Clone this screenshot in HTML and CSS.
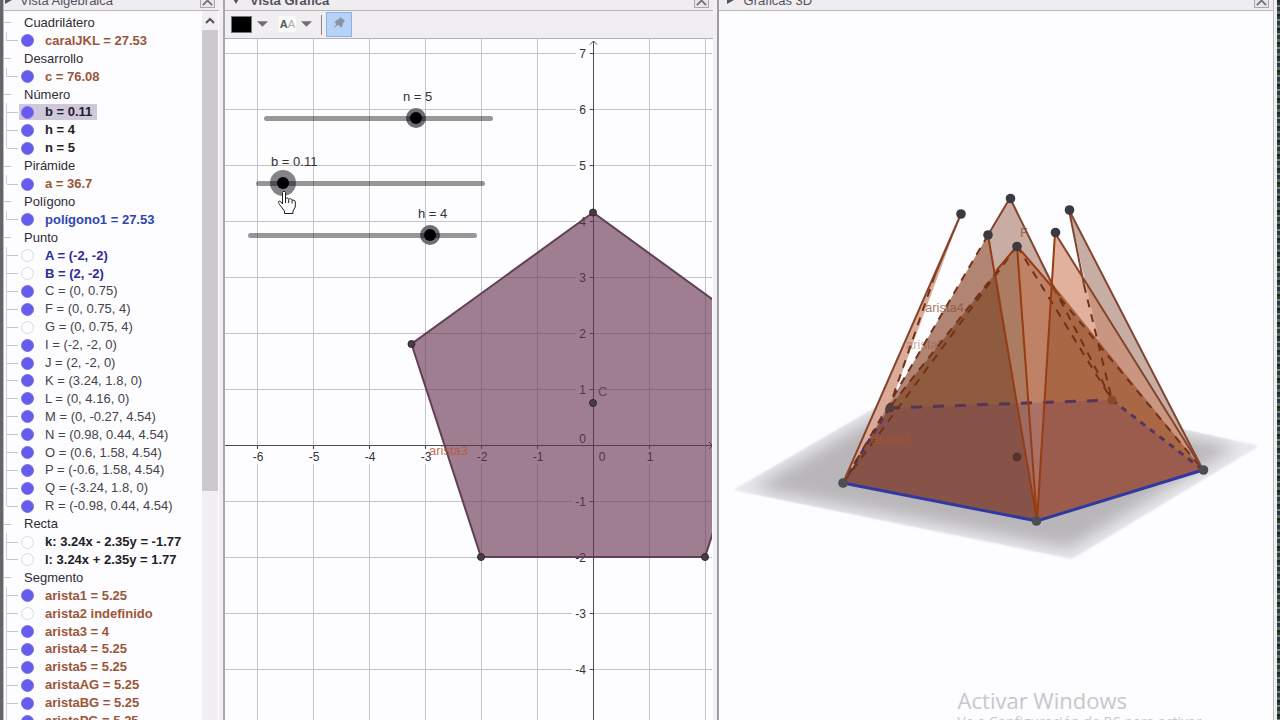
FILE: index.html
```html
<!DOCTYPE html>
<html lang="es">
<head>
<meta charset="utf-8">
<title>GeoGebra</title>
<link rel="stylesheet" href="styles.css">
</head>
<body>
<main class="app">
  <section class="panel algebra">
    <header class="titlebar">
      <svg class="fold" viewBox="0 0 8 8"><path d="M1 0 8 4 1 8z"/></svg>
      <h2>Vista Algebraica</h2>
      <button class="close" aria-label="Cerrar vista algebraica"><svg viewBox="0 0 14 14"><path d="M2 2 12 12M12 2 2 12"/></svg></button>
    </header>
    <div class="tree-area">
      <ul class="tree">
        <li class="group">Cuadrilátero</li>
        <li class="item brown last"><label><input type="checkbox" checked>caralJKL = 27.53</label></li>
        <li class="group">Desarrollo</li>
        <li class="item brown last"><label><input type="checkbox" checked>c = 76.08</label></li>
        <li class="group">Número</li>
        <li class="item black"><label class="selected"><input type="checkbox" checked>b = 0.11</label></li>
        <li class="item black"><label><input type="checkbox" checked>h = 4</label></li>
        <li class="item black last"><label><input type="checkbox" checked>n = 5</label></li>
        <li class="group">Pirámide</li>
        <li class="item brown last"><label><input type="checkbox" checked>a = 36.7</label></li>
        <li class="group">Polígono</li>
        <li class="item blue last"><label><input type="checkbox" checked>polígono1 = 27.53</label></li>
        <li class="group">Punto</li>
        <li class="item navy"><label><input type="checkbox">A = (-2, -2)</label></li>
        <li class="item navy"><label><input type="checkbox">B = (2, -2)</label></li>
        <li class="item"><label><input type="checkbox" checked>C = (0, 0.75)</label></li>
        <li class="item"><label><input type="checkbox" checked>F = (0, 0.75, 4)</label></li>
        <li class="item"><label><input type="checkbox">G = (0, 0.75, 4)</label></li>
        <li class="item"><label><input type="checkbox" checked>I = (-2, -2, 0)</label></li>
        <li class="item"><label><input type="checkbox" checked>J = (2, -2, 0)</label></li>
        <li class="item"><label><input type="checkbox" checked>K = (3.24, 1.8, 0)</label></li>
        <li class="item"><label><input type="checkbox" checked>L = (0, 4.16, 0)</label></li>
        <li class="item"><label><input type="checkbox" checked>M = (0, -0.27, 4.54)</label></li>
        <li class="item"><label><input type="checkbox" checked>N = (0.98, 0.44, 4.54)</label></li>
        <li class="item"><label><input type="checkbox" checked>O = (0.6, 1.58, 4.54)</label></li>
        <li class="item"><label><input type="checkbox" checked>P = (-0.6, 1.58, 4.54)</label></li>
        <li class="item"><label><input type="checkbox" checked>Q = (-3.24, 1.8, 0)</label></li>
        <li class="item last"><label><input type="checkbox" checked>R = (-0.98, 0.44, 4.54)</label></li>
        <li class="group">Recta</li>
        <li class="item black"><label><input type="checkbox">k: 3.24x - 2.35y = -1.77</label></li>
        <li class="item black last"><label><input type="checkbox">l: 3.24x + 2.35y = 1.77</label></li>
        <li class="group">Segmento</li>
        <li class="item brown"><label><input type="checkbox" checked>arista1 = 5.25</label></li>
        <li class="item brown"><label><input type="checkbox">arista2 indefinido</label></li>
        <li class="item brown"><label><input type="checkbox" checked>arista3 = 4</label></li>
        <li class="item brown"><label><input type="checkbox" checked>arista4 = 5.25</label></li>
        <li class="item brown"><label><input type="checkbox" checked>arista5 = 5.25</label></li>
        <li class="item brown"><label><input type="checkbox" checked>aristaAG = 5.25</label></li>
        <li class="item brown"><label><input type="checkbox" checked>aristaBG = 5.25</label></li>
        <li class="item brown"><label><input type="checkbox" checked>aristaPG = 5.25</label></li>
      </ul>
      <div class="scrollbar">
        <button class="scroll-up" aria-label="Subir"><svg viewBox="0 0 10 8"><path d="M1 6 5 2 9 6"/></svg></button>
        <div class="scroll-thumb"></div>
      </div>
    </div>
  </section>

  <section class="panel graphics">
    <header class="titlebar strong">
      <svg class="fold" viewBox="0 0 8 8"><path d="M0 1 8 1 4 8z"/></svg>
      <h2>Vista Gráfica</h2>
      <button class="close" aria-label="Cerrar vista gráfica"><svg viewBox="0 0 14 14"><path d="M2 2 12 12M12 2 2 12"/></svg></button>
    </header>
    <div class="toolbar">
      <button class="tool" aria-label="Color"><span class="swatch"></span><svg class="caret" viewBox="0 0 12 6"><path d="M0 0H12L6 6z"/></svg></button>
      <button class="tool" aria-label="Tamaño de texto"><span class="aa">A<span>A</span></span><svg class="caret" viewBox="0 0 12 6"><path d="M0 0H12L6 6z"/></svg></button>
      <button class="pin" aria-label="Fijar a la pantalla"><svg viewBox="0 0 16 16"><path d="M9 1 15 5 13 7 12 11 10 13 7 10 2 14 5 9 3 7 6 4 8 4z"/></svg></button>
    </div>
    <div class="canvas">
      <svg class="scene" role="img" aria-label="Pentágono en el plano">
        <g transform="translate(-225 -39)">
          <path class="grid" d="M257.500 39V720M313.500 39V720M369.500 39V720M425.500 39V720M481.500 39V720M537.500 39V720M649.500 39V720M705.500 39V720M225 53.500H720M225 109.500H720M225 165.500H720M225 221.500H720M225 277.500H720M225 333.500H720M225 389.500H720M225 501.500H720M225 557.500H720M225 613.500H720M225 669.500H720"/>
          <path class="mask" d="M576 46h13v15h-13zM576 102h13v15h-13zM576 158h13v15h-13zM576 214h13v15h-13zM576 270h13v15h-13zM576 326h13v15h-13zM576 382h13v15h-13zM572 494h17v15h-17zM572 550h17v15h-17zM572 606h17v15h-17zM572 662h17v15h-17zM250 449h16v15h-16zM306 449h16v15h-16zM362 449h16v15h-16zM418 449h16v15h-16zM474 449h16v15h-16zM530 449h16v15h-16zM645 449h10v15h-10z"/>
          <path class="axis" d="M225 445.500H712M593.500 41V720M590 53.500h3M590 109.500h3M590 165.500h3M590 221.500h3M590 277.500h3M590 333.500h3M590 389.500h3M590 501.500h3M590 557.500h3M590 613.500h3M590 669.500h3M257.500 446v3M313.500 446v3M369.500 446v3M425.500 446v3M481.500 446v3M537.500 446v3M649.500 446v3M590 44.500 593.500 41 597 44.500M709 442 712.500 445.500 709 449"/>
          <g class="ticks" text-anchor="end">
            <text x="586" y="58">7</text><text x="586" y="114">6</text><text x="586" y="170">5</text><text x="586" y="226">4</text><text x="586" y="282">3</text><text x="586" y="338">2</text><text x="586" y="394">1</text><text x="586" y="443">0</text><text x="586" y="506">-1</text><text x="586" y="562">-2</text><text x="586" y="618">-3</text><text x="586" y="674">-4</text>
          </g>
          <g class="ticks" text-anchor="middle">
            <text x="258" y="461">-6</text><text x="314" y="461">-5</text><text x="370" y="461">-4</text><text x="426" y="461">-3</text><text x="482" y="461">-2</text><text x="538" y="461">-1</text><text x="602" y="461">0</text><text x="650" y="461">1</text>
          </g>
          <path class="pentagon" d="M593 212.500 411.500 344 481 557 705 557 774 344z"/>
          <g class="points"><circle cx="593" cy="212.500" r="3.500"/><circle cx="411.500" cy="344" r="3.500"/><circle cx="481" cy="557" r="3.500"/><circle cx="705" cy="557" r="3.500"/><circle cx="593" cy="403" r="3.500"/></g>
          <text class="edge-name" x="429" y="455">arista3</text>
          <text class="point-name" x="598" y="396">C</text>
        </g>
      </svg>
      <label class="slider slider-n"><span class="value">n = 5</span><span class="rail"></span><input type="range" min="3" max="6" value="5"></label>
      <label class="slider slider-b"><span class="value">b = 0.11</span><span class="rail"></span><input type="range" min="0" max="1" step="0.01" value="0.11"></label>
      <label class="slider slider-h"><span class="value">h = 4</span><span class="rail"></span><input type="range" min="0" max="5" value="4"></label>
      <svg class="hand" viewBox="0 0 20 25"><path d="M5.500 2.500C5.500 .8 8.500 .8 8.500 2.500V9C9 7.500 11.500 7.600 11.700 9.300 12.500 8.200 14.800 8.600 15 10.300 16 9.600 18.300 10.200 18.300 12V17L16 21V23.500H7.500V21L2.500 14.500C.5 11.500 2 10.500 3.500 11.500L5.500 14zM8.500 9V13M11.700 9.500V13M15 10.500V13.500"/></svg>
    </div>
  </section>

  <section class="panel space">
    <header class="titlebar">
      <svg class="fold" viewBox="0 0 8 8"><path d="M1 0 8 4 1 8z"/></svg>
      <h2>Gráficas 3D</h2>
      <button class="close" aria-label="Cerrar gráficas 3D"><svg viewBox="0 0 14 14"><path d="M2 2 12 12M12 2 2 12"/></svg></button>
    </header>
    <div class="canvas">
      <svg class="scene" role="img" aria-label="Pirámide pentagonal y su desarrollo">
        <defs>
          <filter id="soft" x="-20%" y="-20%" width="140%" height="140%"><feGaussianBlur stdDeviation="8"/></filter>
          <filter id="edge"><feGaussianBlur stdDeviation="1"/></filter>
          <clipPath id="plane"><path d="M733 490 933 374 1259 446 1072 559z"/></clipPath>
        </defs>
        <g transform="translate(-719 -11)">
          <path class="plane-edge" filter="url(#edge)" d="M733 490 933 374 1259 446 1072 559z"/>
          <g clip-path="url(#plane)"><path class="plane-core" filter="url(#soft)" d="M752 488 936 382 1236 447 1069 549z"/></g>
          <path fill="#c9ada5" d="M1010 198 889 408 1112 400z"/>
          <path fill="#c7aea4" d="M1069 210 1203 470 1112 400z"/>
          <path fill="#d9ab98" d="M961 214 889 408 843 483z"/>
          <path fill="#e1b19d" d="M1055 233 1203 470 1037 521z"/>
          <path fill="#c99781" d="M1086 284 1203 470 1112 400z"/>
          <path fill="#b18473" d="M988 235 843 483 1037 521z"/>
          <path fill="#8f5b3f" d="M1017 246 889 408 843 483 1037 521z"/>
          <path fill="#ab7b62" d="M1017 246 996 272 1037 521z"/>
          <path fill="#c08266" d="M1017 246 1054 290 1037 521z"/>
          <path fill="#aa6746" d="M1052 283 1203 470 1037 521z"/>
          <path fill="#6c3968" opacity=".23" d="M843 483 1037 521 1203 470 1112 400 889 408z"/>
          <path class="hidden-base" d="M889 408 1112 400"/>
          <path class="hidden-base short" d="M1112 400 1203 470M889 408 843 483"/>
          <path class="hidden-edge" d="M935 275 889 408M988 235 843 483M1017 246 889 408M1017 246 843 483M1017 246 1112 400M1053 286 1112 400M1084 285 1112 400M1060 298 1203 470"/>
          <path class="solid-dark" d="M1010 198 988 235M1010 198 1054 288M961 214 843 483M1069 210 1203 470M1055 233 1203 470M1069 210 1084 285M961 214 935 275"/>
          <path class="solid" d="M988 235 1037 521M1017 246 1037 521M1055 233 1037 521M1017 246 996 271M1017 246 1060 296"/>
          <path class="base-line" d="M843 483 1037 521 1203 470"/>
          <g class="labels3d"><text x="925" y="312">arista4</text><text x="906" y="349" opacity=".6">arista5</text><text class="hot" x="871" y="444">arista2</text><text x="1020" y="237">F</text></g>
          <g class="balls"><circle cx="961" cy="214" r="4.800"/><circle cx="1010.500" cy="198.500" r="4.800"/><circle cx="988" cy="235" r="4.800"/><circle cx="1017" cy="246.500" r="4.800"/><circle cx="1055.500" cy="232.500" r="4.800"/><circle cx="1069.500" cy="210" r="4.800"/></g>
          <g class="feet"><circle cx="843" cy="483" r="4.800"/><circle cx="1036.500" cy="521" r="4.800"/><circle cx="1203.500" cy="470" r="4.800"/></g>
          <circle fill="#5b302c" cx="1017" cy="457" r="4.500"/>
          <circle fill="#8d4722" cx="1112" cy="400" r="4.500"/>
          <circle fill="#573c37" cx="890" cy="408" r="4.500"/>
        </g>
      </svg>
      <div class="watermark">
        <p class="wm-title">Activar Windows</p>
        <p class="wm-text">Ve a Configuración de PC para activar</p>
      </div>
    </div>
  </section>
  <div class="desktop-edge"></div>
</main>
</body>
</html>
```
FILE: styles.css
```css
* { box-sizing: border-box; }

body {
  margin: 0;
  overflow: hidden;
  background: #f2eff3;
  font-family: "Liberation Sans", Arial, sans-serif;
  font-size: 13px;
  color: #333;
}

button { border: 0; padding: 0; background: none; font: inherit; }

.app {
  display: flex;
  height: calc(100vh + 12px);
  margin-top: -12px;
  border-left: 3px solid #66636a;
  overflow: hidden;
}

.panel { display: flex; flex-direction: column; min-width: 0; background: #fdfcfe; }
.algebra { flex: 0 0 216px; border-left: 1px solid #bbb8bf; }
.graphics { flex: 489 1 0; margin-left: 4px; border-left: 2px solid #aaa6ad; }
.space { flex: 556 1 0; margin-left: 4px; border-left: 2px solid #9f9ba2; }

.titlebar {
  display: flex;
  flex: 0 0 23px;
  align-items: center;
  gap: 8px;
  padding: 2px 4px 0 0;
  background: #efedf0;
  border-bottom: 1px solid #b9b6bb;
  color: #55535a;
}
.titlebar h2 { flex: 1; margin: 0; font-size: 13px; font-weight: 400; white-space: nowrap; }
.titlebar.strong h2 { font-weight: 700; }
.graphics .titlebar, .space .titlebar { padding-left: 7px; gap: 10px; }
.fold { width: 8px; height: 8px; fill: #55535a; }
.close { width: 15px; height: 15px; border: 1px solid #aaa7ad; background: #e8e6e9; }
.close svg { display: block; width: 13px; height: 13px; fill: none; stroke: #77747b; stroke-width: 2; }

.tree-area { display: flex; flex: 1; min-height: 0; padding-right: 1px; overflow: hidden; }
.tree {
  display: grid;
  grid-auto-rows: 1fr;
  flex: 1;
  height: 716px;
  margin: 3px 0 0;
  padding: 0;
  list-style: none;
  white-space: nowrap;
}
.tree li { display: flex; align-items: center; line-height: 16px; background-repeat: no-repeat; }
.group {
  padding-left: 20px;
  color: #2f2d33;
  background-image: linear-gradient(#c6c3c9, #c6c3c9);
  background-position: 0 50%;
  background-size: 7px 1px;
}
.item {
  padding-left: 15px;
  color: #454349;
  background-image: linear-gradient(#d0cdd3, #d0cdd3), linear-gradient(#c6c3c9, #c6c3c9);
  background-position: 2px 0, 3px 50%;
  background-size: 1px 100%, 11px 1px;
}
.item.last { background-size: 1px 50%, 11px 1px; }
.item label { display: flex; align-items: center; gap: 11px; padding: 0 5px 0 2px; }
.item .selected { background: #cfc8dc; }
.item input {
  appearance: none;
  width: 13px;
  height: 13px;
  margin: 0;
  border: 1px solid #dcd9e2;
  border-radius: 50%;
  background: #fdfcfe;
}
.item input:checked { border-color: #7a72e6; background: #655bed; }
.brown, .black, .blue, .navy { font-weight: 700; }
.brown { color: #9b5639; }
.black { color: #222026; }
.blue { color: #2f46b0; }
.navy { color: #2e2a9a; }

.scrollbar { display: flex; flex-direction: column; flex: 0 0 16px; background: #f1eff2; }
.scroll-up { height: 19px; }
.scroll-up svg { width: 10px; height: 8px; fill: none; stroke: #55535a; stroke-width: 2; }
.scroll-thumb { height: 65%; background: #cbc9cc; }

.toolbar {
  display: flex;
  flex: 0 0 28px;
  align-items: center;
  gap: 11px;
  padding: 0 0 1px 6px;
  background: #f0eef1;
  border-bottom: 1px solid #b4b1b7;
}
.tool { display: flex; align-items: center; gap: 5px; }
.swatch { width: 21px; height: 17px; background: #000; border: 1px solid #77747b; }
.caret { width: 11px; height: 6px; fill: #706d74; }
.aa { width: 17px; background: #fafafa; font-size: 11px; font-weight: 700; line-height: 16px; color: #555; }
.aa span { font-weight: 400; color: #aaa; }
.pin { position: relative; width: 26px; height: 25px; margin-left: 3px; border: 1px solid #8db1e2; background: #b6d2f6; }
.pin::before { content: ""; position: absolute; left: -6px; top: 2px; width: 1px; height: 20px; background: #88858c; }
.pin svg { width: 14px; height: 14px; fill: #8794a8; }

.canvas { position: relative; flex: 1; min-height: 0; overflow: hidden; }
.scene { display: block; width: 100%; height: 100%; }
.graphics .canvas { margin-right: 1px; }

.grid { fill: none; stroke: #c7c4c9; }
.mask { fill: #fdfcfe; }
.axis { fill: none; stroke: #4c494f; }
.ticks { font-size: 12px; fill: #333; }
.pentagon { fill: #65304d; fill-opacity: .62; stroke: #5f4054; stroke-width: 2; }
.points circle { fill: #493c46; stroke: #2c2630; }
.edge-name { font-size: 13px; fill: #bd5239; fill-opacity: .85; }
.point-name { font-size: 13px; fill: #634654; }

.slider { position: absolute; display: flex; flex-direction: column; width: 237px; }
.value { height: 16px; line-height: 16px; }
.slider input { appearance: none; width: 100%; height: 26px; margin: 0; background: none; }
.slider input::-webkit-slider-thumb {
  appearance: none;
  width: 12px;
  height: 12px;
  border-radius: 50%;
  background: #000;
  box-shadow: 0 0 0 4px #6f6d72;
}
.rail { position: absolute; left: 4px; right: 4px; bottom: 10px; height: 5px; border-radius: 3px; background: #00000066; }
.slider-n { left: 35px; top: 50px; }
.slider-n .value { padding-left: 143px; }
.slider-b { left: 27px; top: 115px; }
.slider-b .value { padding-left: 19px; }
.slider-b input::-webkit-slider-thumb { box-shadow: 0 0 0 7px #858387; }
.slider-h { left: 19px; top: 167px; }
.slider-h .value { padding-left: 174px; }
.hand { position: absolute; left: 52px; top: 151px; width: 20px; height: 25px; fill: #fff; stroke: #222; stroke-width: 1; }

.plane-edge { fill: #e9e8ea; }
.plane-core { fill: #b8b6b9; }
.hidden-base { fill: none; stroke: #56345b; stroke-width: 3; stroke-dasharray: 11 11; }
.hidden-base.short { stroke-dasharray: 6 6; }
.hidden-edge { fill: none; stroke: #713116; stroke-width: 2; stroke-dasharray: 8 7; }
.solid, .solid-dark { fill: none; stroke: #973c13; stroke-width: 2; }
.solid-dark { stroke: #85452c; }
.base-line { fill: none; stroke: #3038a2; stroke-width: 3; }
.labels3d { font-size: 13px; fill: #8b4f38; fill-opacity: .75; }
.labels3d .hot { fill: #b34d2c; }
.balls { fill: #3a3a40; }
.feet { fill: #4b4c54; }

.watermark { position: absolute; left: 239px; bottom: -10px; color: #c9c7ca; font-family: "Open Sans", "Noto Sans", sans-serif; white-space: nowrap; }
.watermark p { margin: 0; }
.wm-title { font-size: 22px; line-height: 28px; }
.wm-text { font-size: 14px; line-height: 16px; }

.desktop-edge {
  flex: 0 0 7px;
  border-left: 1px solid #bcb9bf;
  background:
    linear-gradient(90deg, #f2eff3 3px, transparent 3px),
    repeating-linear-gradient(#263b2e 0 3px, #6d8a70 3px 5px, #39304e 5px 9px, #4f7752 9px 12px, #1f2028 12px 14px);
}
```
